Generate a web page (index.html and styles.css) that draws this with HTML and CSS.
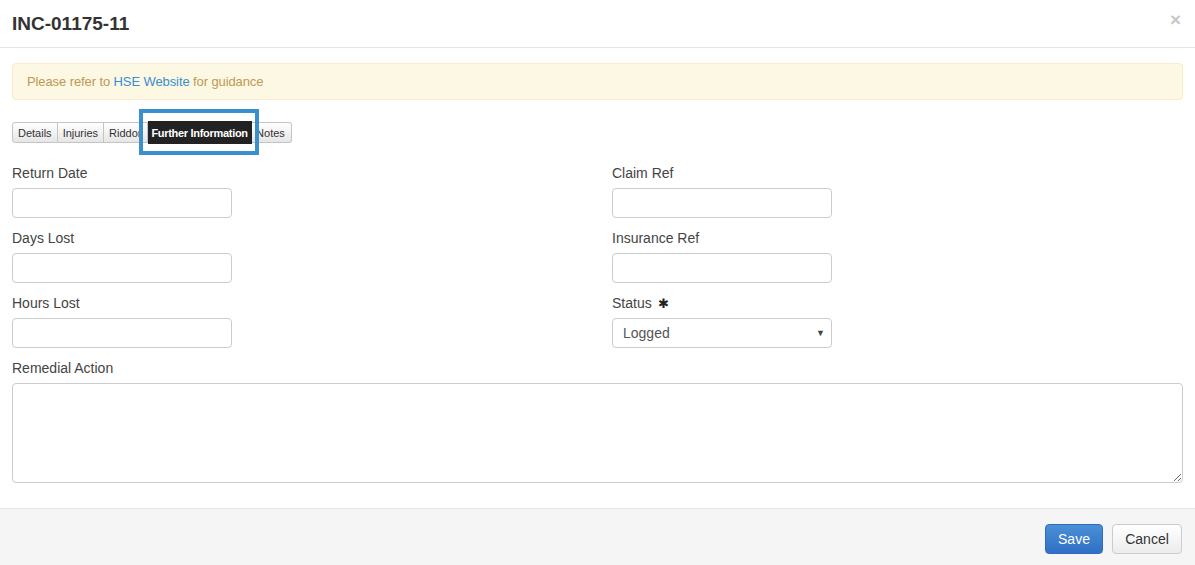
FILE: index.html
```html
<!DOCTYPE html>
<html lang="en">
<head>
    <meta charset="UTF-8">
    <meta name="viewport" content="width=device-width, initial-scale=1.0">
    <title>INC-01175-11</title>
    <link rel="stylesheet" href="styles.css">
</head>
<body>

    <!-- Modal header -->
    <div class="modal-header">
        <h4 class="modal-title">INC-01175-11</h4>
        <span class="close">&times;</span>
    </div>

    <!-- Modal body -->
    <div class="modal-body">
        <div class="alert">Please refer to <a href="#">HSE Website</a> for guidance</div>

        <div class="tabs">
            <button class="tab">Details</button>
            <button class="tab">Injuries</button>
            <button class="tab">Riddor</button>
            <button class="tab active">Further Information</button>
            <button class="tab">Notes</button>
            <div class="highlight"></div>
        </div>

        <div class="form-grid">
            <div class="field">
                <label>Return Date</label>
                <input type="text">
            </div>
            <div class="field">
                <label>Claim Ref</label>
                <input type="text">
            </div>
            <div class="field">
                <label>Days Lost</label>
                <input type="text">
            </div>
            <div class="field">
                <label>Insurance Ref</label>
                <input type="text">
            </div>
            <div class="field">
                <label>Hours Lost</label>
                <input type="text">
            </div>
            <div class="field">
                <label>Status <span class="req">&#10033;</span></label>
                <div class="select">
                    <span>Logged</span>
                    <span class="caret">&#9660;</span>
                </div>
            </div>
        </div>

        <div class="field wide">
            <label>Remedial Action</label>
            <textarea></textarea>
        </div>
    </div>

    <!-- Modal footer -->
    <div class="modal-footer">
        <button class="btn btn-primary">Save</button>
        <button class="btn btn-default">Cancel</button>
    </div>

</body>
</html>
```

FILE: styles.css
```css
/* Base */
body {
    margin: 0;
    font-family: 'Liberation Sans', Arial, sans-serif;
    font-size: 14px;
    color: #333;
    background: #fff;
}

/* Header */
.modal-header {
    display: flex;
    align-items: center;
    justify-content: space-between;
    height: 47px;
    padding: 0 12px;
    border-bottom: 1px solid #e5e5e5;
}

.modal-title {
    margin: 0;
    font-size: 19px;
    font-weight: bold;
    color: #333;
    position: relative;
    top: 0;
}

.close {
    font-size: 19px;
    font-weight: bold;
    color: #c8c8c8;
    position: relative;
    top: -4px;
    right: 2px;
}

/* Body */
.modal-body {
    padding: 15px 12px 25px 12px;
}

.alert {
    background: #fcf8e3;
    border: 1px solid #faebcc;
    border-radius: 4px;
    color: #c09853;
    font-size: 13px;
    height: 37px;
    box-sizing: border-box;
    padding: 10px 14px;
    letter-spacing: -0.1px;
}

.alert a {
    color: #3a8fcf;
    text-decoration: none;
}

/* Tabs */
.tabs {
    position: relative;
    display: flex;
    margin-top: 22px;
    margin-bottom: 19px;
}

.tab {
    font-family: 'Liberation Sans', Arial, sans-serif;
    font-size: 11px;
    color: #333;
    height: 21px;
    padding: 0 5px;
    margin: 0;
    background: linear-gradient(#ffffff, #e6e6e6);
    border: 1px solid #c4c4c4;
    border-left: none;
}

.tab:first-child {
    border-left: 1px solid #c4c4c4;
    border-radius: 3px 0 0 3px;
}

.tab:last-of-type {
    border-radius: 0 3px 3px 0;
    padding: 0 6px 0 4px;
}

.tab:nth-child(3) {
    width: 44px;
    overflow: hidden;
    text-align: left;
    white-space: nowrap;
}

.tab.active {
    background: #222;
    color: #fff;
    font-weight: bold;
    border-color: #222;
    width: 104px;
    padding: 0;
    height: 23px;
    margin-top: -1px;
    letter-spacing: -0.3px;
}

/* Annotation box */
.highlight {
    position: absolute;
    left: 127px;
    top: -13px;
    width: 112px;
    height: 38px;
    border: 4px solid #3a8fcf;
}

/* Form */
.form-grid {
    display: grid;
    grid-template-columns: 600px 1fr;
    row-gap: 10px;
}

.field label {
    display: block;
    height: 20px;
    line-height: 20px;
    margin-bottom: 5px;
    color: #444;
}

.field input,
.select {
    display: block;
    width: 220px;
    height: 30px;
    box-sizing: border-box;
    border: 1px solid #ccc;
    border-radius: 4px;
    font-size: 14px;
}

.select {
    display: flex;
    align-items: center;
    justify-content: space-between;
    padding: 0 6px 0 10px;
    color: #555;
}

.caret {
    font-size: 9px;
    color: #444;
}

.req {
    font-size: 13px;
    color: #222;
    margin-left: 2px;
}

.wide {
    margin-top: 10px;
}

.wide textarea {
    display: block;
    width: 100%;
    height: 100px;
    box-sizing: border-box;
    border: 1px solid #ccc;
    border-radius: 4px;
    resize: vertical;
}

/* Footer */
.modal-footer {
    display: flex;
    justify-content: flex-end;
    gap: 9px;
    padding: 15px 13px 0 12px;
    height: 57px;
    box-sizing: border-box;
    background: #f5f5f5;
    border-top: 1px solid #e5e5e5;
}

.btn {
    font-family: 'Liberation Sans', Arial, sans-serif;
    font-size: 14px;
    height: 30px;
    padding: 0 12px;
    border-radius: 4px;
    cursor: pointer;
}

.btn-primary {
    color: #fff;
    background: linear-gradient(#4a90d6, #2f6fc6);
    border: 1px solid #2d6bbf;
    width: 58px;
}

.btn-default {
    color: #333;
    background: linear-gradient(#ffffff, #ececec);
    border: 1px solid #ccc;
    width: 70px;
}
```
